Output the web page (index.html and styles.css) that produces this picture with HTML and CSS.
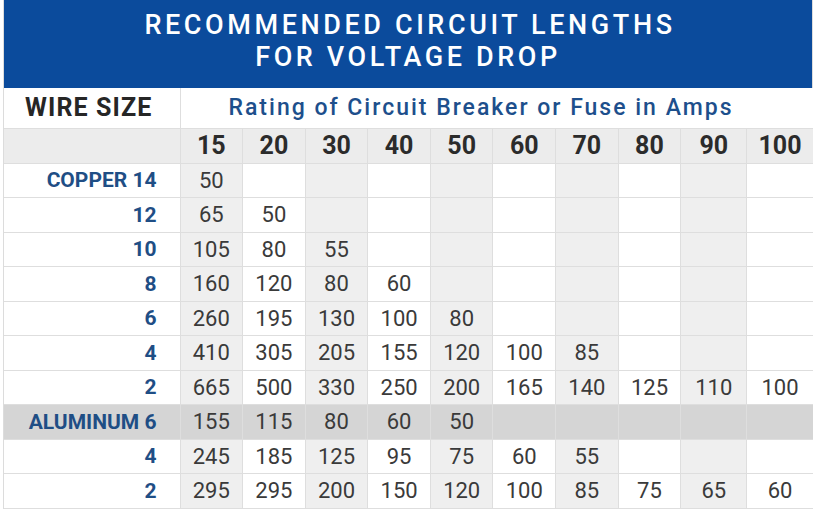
FILE: index.html
```html
<!DOCTYPE html>
<html>
<head>
<meta charset="utf-8">
<link rel="stylesheet" href="styles.css">
</head>
<body>
<div class="chart">
  <div class="title">RECOMMENDED CIRCUIT LENGTHS<br>FOR VOLTAGE DROP</div>
  <table class="grid">
    <colgroup>
      <col class="c-wire">
      <col class="c-n"><col class="c-n"><col class="c-n"><col class="c-n"><col class="c-n">
      <col class="c-n"><col class="c-n"><col class="c-n"><col class="c-w"><col class="c-w">
    </colgroup>
    <tr class="r-top">
      <th class="wire">WIRE SIZE</th>
      <th class="rating" colspan="10">Rating of Circuit Breaker or Fuse in Amps</th>
    </tr>
    <tr class="r-amps">
      <th></th><th>15</th><th>20</th><th>30</th><th>40</th><th>50</th><th>60</th><th>70</th><th>80</th><th>90</th><th>100</th>
    </tr>
    <tr><th class="lbl">COPPER 14</th><td class="s">50</td><td></td><td class="s"></td><td></td><td class="s"></td><td></td><td class="s"></td><td></td><td class="s"></td><td></td></tr>
    <tr><th class="lbl">12</th><td class="s">65</td><td>50</td><td class="s"></td><td></td><td class="s"></td><td></td><td class="s"></td><td></td><td class="s"></td><td></td></tr>
    <tr><th class="lbl">10</th><td class="s">105</td><td>80</td><td class="s">55</td><td></td><td class="s"></td><td></td><td class="s"></td><td></td><td class="s"></td><td></td></tr>
    <tr><th class="lbl">8</th><td class="s">160</td><td>120</td><td class="s">80</td><td>60</td><td class="s"></td><td></td><td class="s"></td><td></td><td class="s"></td><td></td></tr>
    <tr><th class="lbl">6</th><td class="s">260</td><td>195</td><td class="s">130</td><td>100</td><td class="s">80</td><td></td><td class="s"></td><td></td><td class="s"></td><td></td></tr>
    <tr><th class="lbl">4</th><td class="s">410</td><td>305</td><td class="s">205</td><td>155</td><td class="s">120</td><td>100</td><td class="s">85</td><td></td><td class="s"></td><td></td></tr>
    <tr><th class="lbl">2</th><td class="s">665</td><td>500</td><td class="s">330</td><td>250</td><td class="s">200</td><td>165</td><td class="s">140</td><td>125</td><td class="s">110</td><td>100</td></tr>
    <tr class="alu"><th class="lbl">ALUMINUM 6</th><td>155</td><td>115</td><td>80</td><td>60</td><td>50</td><td></td><td></td><td></td><td></td><td></td></tr>
    <tr><th class="lbl">4</th><td class="s">245</td><td>185</td><td class="s">125</td><td>95</td><td class="s">75</td><td>60</td><td class="s">55</td><td></td><td class="s"></td><td></td></tr>
    <tr><th class="lbl">2</th><td class="s">295</td><td>295</td><td class="s">200</td><td>150</td><td class="s">120</td><td>100</td><td class="s">85</td><td>75</td><td class="s">65</td><td>60</td></tr>
  </table>
</div>
</body>
</html>
```
FILE: styles.css
```css
html, body {
  margin: 0;
  padding: 0;
  background: #ffffff;
}
body {
  font-family: Roboto, "Liberation Sans", sans-serif;
}
.chart {
  margin-left: 3px;
  width: 810px;
  border-left: 1px solid #dcdcdc;
  border-right: 1px solid #dcdcdc;
  box-sizing: border-box;
}
.title {
  background: #0b4b9c;
  color: #ffffff;
  text-align: center;
  font-size: 27px;
  font-weight: 500;
  line-height: 31.8px;
  padding: 10px 0 14px;
  height: 88px;
  box-sizing: border-box;
  letter-spacing: 3.6px;
  text-indent: 4px;
}
.grid {
  width: 808px;
  border-collapse: collapse;
  table-layout: fixed;
}
.c-wire { width: 176px; }
.c-n { width: 62.6px; }
.c-w { width: 66px; }
.grid th, .grid td {
  border: 1px solid #dedede;
  padding: 0;
  text-align: center;
  vertical-align: middle;
}
.grid tr > :first-child { border-left: none; }
.grid tr > :last-child { border-right: none; }
.grid tr { height: 34.5px; }
.grid .r-top { height: 40px; }
.grid .r-top th { border-top: none; background: #ffffff; }
.grid .wire {
  font-size: 25px;
  font-weight: 700;
  color: #262626;
  letter-spacing: 1.1px;
  padding-right: 6px;
  text-align: center;
}
.grid .rating {
  text-align: left;
  padding-left: 48px;
  font-size: 23px;
  font-weight: 500;
  letter-spacing: 2px;
  color: #1d4f8c;
}
.grid .r-amps { height: 35px; }
.grid .r-amps th {
  background: #ececec;
  font-size: 25px;
  font-weight: 700;
  color: #2b2b2b;
}
.grid td {
  font-size: 22px;
  font-weight: 400;
  color: #3a3a3a;
  background: #ffffff;
}
.grid td.s { background: #efefef; }
.grid .lbl {
  text-align: right;
  padding-right: 23px;
  font-size: 21px;
  font-weight: 700;
  color: #1f4e85;
  background: #ffffff;
}
.grid .alu th, .grid .alu td { background: #d5d5d5; }
```
